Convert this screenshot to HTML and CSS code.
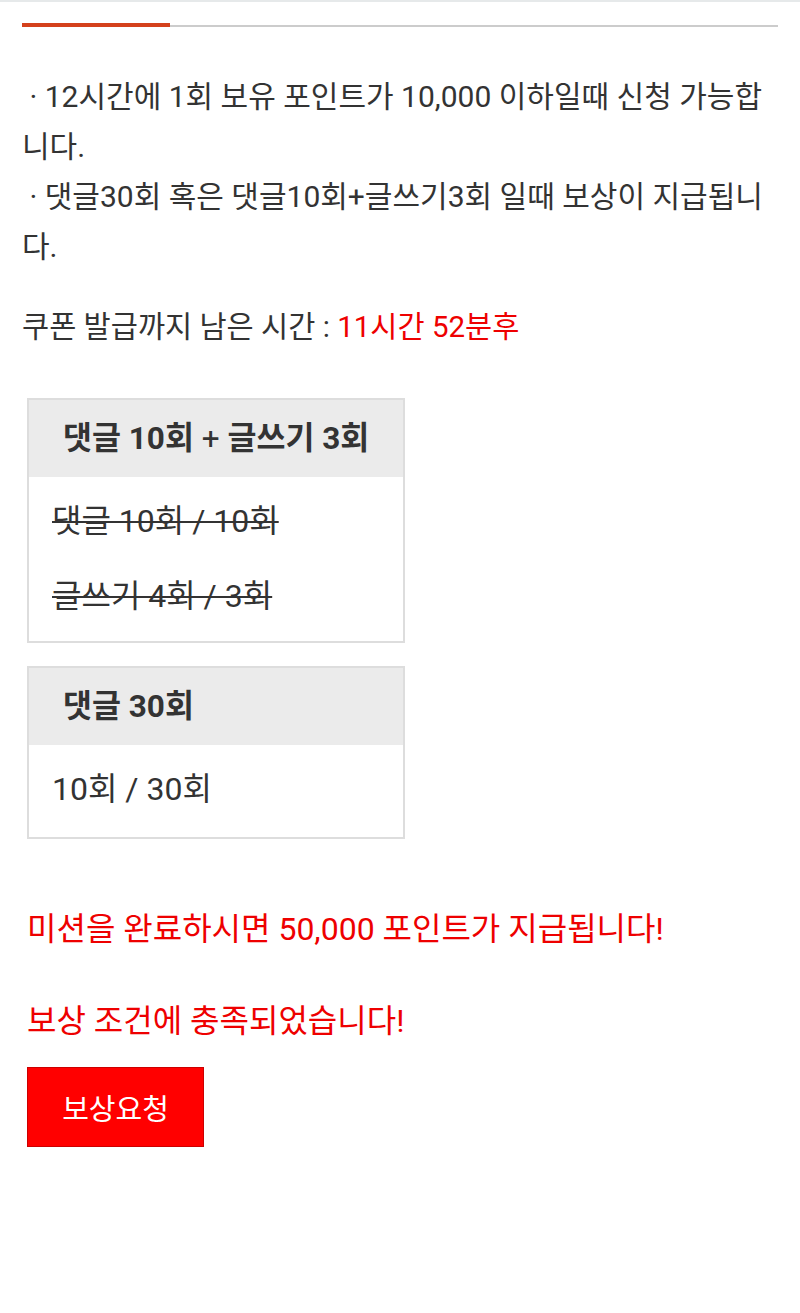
FILE: index.html
```html
<!DOCTYPE html>
<html lang="ko">
<head>
  <meta charset="UTF-8" />
  <meta name="viewport" content="width=device-width, initial-scale=1.0"/>
  <title>출석 보상</title>
  <link rel="stylesheet" href="styles.css">
</head>
<body>
  <div class="wrap">
    <div class="tabbar"><span class="tab-on"></span></div>

    <div class="notice">
      <p>&nbsp;· 12시간에 1회 보유 포인트가 10,000 이하일때 신청 가능합니다.</p>
      <p>&nbsp;· 댓글30회 혹은 댓글10회+글쓰기3회 일때 보상이 지급됩니다.</p>
    </div>

    <p class="timer">쿠폰 발급까지 남은 시간 : <span class="red">11시간 52분후</span></p>

    <div class="mission">
      <div class="mission-head">댓글 10회 <span class="plus">+</span> 글쓰기 3회</div>
      <div class="mission-body">
        <p class="done">댓글 10회 / 10회</p>
        <p class="done">글쓰기 4회 / 3회</p>
      </div>
    </div>

    <div class="mission">
      <div class="mission-head">댓글 30회</div>
      <div class="mission-body">
        <p>10회 / 30회</p>
      </div>
    </div>

    <p class="alert first">미션을 완료하시면 50,000 포인트가 지급됩니다!</p>
    <p class="alert">보상 조건에 충족되었습니다!</p>

    <button class="reward-btn">보상요청</button>
  </div>
</body>
</html>
```

FILE: styles.css
```css
body {
  margin: 0;
  background: #fff;
  border-top: 2px solid #e6e9ea;
  font-family: Roboto, "Noto Sans CJK KR", sans-serif;
  color: #333;
}
.wrap {
  padding: 21px 22px 40px;
}
.tabbar {
  height: 2px;
  margin-top: 2px;
  background: #ccc;
  position: relative;
}
.tab-on {
  position: absolute;
  left: 0;
  top: -2px;
  width: 148px;
  height: 4px;
  background: #d4411c;
}
.notice {
  margin-top: 45px;
}
.notice p,
.timer {
  margin: 0;
  font-size: 30px;
  line-height: 50px;
}
.timer {
  margin-top: 30px;
  font-size: 29.5px;
}
.red {
  color: #e00;
}
.mission {
  width: 374px;
  margin-left: 5px;
  border: 2px solid #ddd;
}
.timer + .mission {
  margin-top: 46px;
}
.mission + .mission {
  margin-top: 23px;
}
.mission-head {
  background: #ebebeb;
  height: 77px;
  line-height: 77px;
  padding-left: 34px;
  font-size: 31.5px;
  font-weight: bold;
}
.plus {
  font-weight: normal;
}
.mission-body {
  padding: 20px 23px 21px;
}
.mission-body p {
  margin: 0;
  font-size: 32px;
  line-height: 48px;
}
.mission-body p + p {
  margin-top: 27px;
}
.mission + .mission .mission-body {
  padding-bottom: 24px;
}
.done {
  text-decoration: line-through;
  text-decoration-thickness: 2px;
}
.alert {
  margin: 0;
  color: #e00;
  padding-left: 5px;
  font-size: 32px;
  line-height: 50px;
}
.alert.first {
  margin-top: 65px;
}
.alert + .alert {
  margin-top: 42px;
}
.reward-btn {
  display: block;
  margin: 21px 0 0 5px;
  width: 177px;
  height: 80px;
  background: #f00;
  border: 1px solid #c00;
  color: #fff;
  font-family: inherit;
  font-size: 29px;
  padding: 0;
}
```
